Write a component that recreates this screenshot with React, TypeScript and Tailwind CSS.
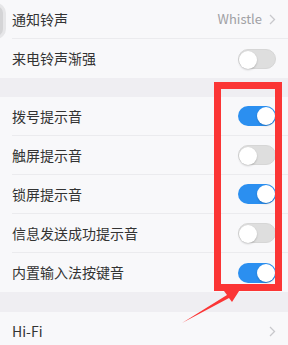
import React from "react";

type Row = { label: string; on: boolean };

const soundRows: Row[] = [
  { label: "拨号提示音", on: true },
  { label: "触屏提示音", on: false },
  { label: "锁屏提示音", on: true },
  { label: "信息发送成功提示音", on: false },
  { label: "内置输入法按键音", on: true },
];

function Toggle({ on }: { on: boolean }) {
  return (
    <div
      className={`relative w-[38px] h-[20px] rounded-full ${
        on ? "bg-[#2b8ff0]" : "bg-[#dedede] border border-[#d6d6d6]"
      }`}
    >
      <div
        className={`absolute top-[1px] w-[18px] h-[18px] rounded-full bg-white shadow-[0_1px_2px_rgba(0,0,0,0.2)] ${
          on ? "right-[1px]" : "left-[0px] top-[0px]"
        }`}
      />
    </div>
  );
}

function Chevron() {
  return (
    <svg width="7" height="11" viewBox="0 0 7 11" fill="none">
      <path d="M1 1l4.5 4.5L1 10" stroke="#c8c8cc" strokeWidth="1.3" />
    </svg>
  );
}

function Item({ label, last, children }: { label: string; last?: boolean; children?: React.ReactNode }) {
  return (
    <div className="pl-3 bg-[#f8f8fa]">
      <div
        className={`h-[39px] flex items-center justify-between pr-3 ${
          last ? "" : "border-b border-[#ebebee]"
        }`}
      >
        <span className="text-[14px] text-[#333]">{label}</span>
        {children}
      </div>
    </div>
  );
}

export default function App() {
  return (
    <div
      className="relative w-[288px] h-[345px] overflow-hidden bg-[#f8f8fa]"
      style={{ fontFamily: '"Noto Sans CJK SC", "Noto Sans", sans-serif' }}
    >
      {/* settings list */}
      <div className="flex flex-col">
        <Item label="通知铃声">
          <div className="flex items-center gap-[7px]">
            <span className="text-[13px] text-[#a0a0a4]">Whistle</span>
            <Chevron />
          </div>
        </Item>
        <Item label="来电铃声渐强" last>
          <Toggle on={false} />
        </Item>
        <div className="h-[19px] bg-[#efeef2]" />
        {soundRows.map((r, i) => (
          <Item key={r.label} label={r.label} last={i === soundRows.length - 1}>
            <Toggle on={r.on} />
          </Item>
        ))}
        <div className="h-[20px] bg-[#efeef2]" />
        <Item label="Hi-Fi" last>
          <Chevron />
        </Item>
      </div>

      {/* edge artifact */}
      <div className="absolute left-[-14px] top-[3px] w-[20px] h-[36px] rounded-full bg-[#d4d4d6] border-[3px] border-[#e6e6e8]" />

      {/* red highlight box */}
      <div className="absolute left-[214px] top-[82px] w-[68px] h-[209px] border-[7px] border-[#fb3535]" />

      {/* arrow */}
      <svg className="absolute left-0 top-0" width="288" height="345" viewBox="0 0 288 345">
        <polygon points="182,323 227,295 224,291 241,288 232,302 229,298" fill="#fb3535" />
      </svg>
    </div>
  );
}
